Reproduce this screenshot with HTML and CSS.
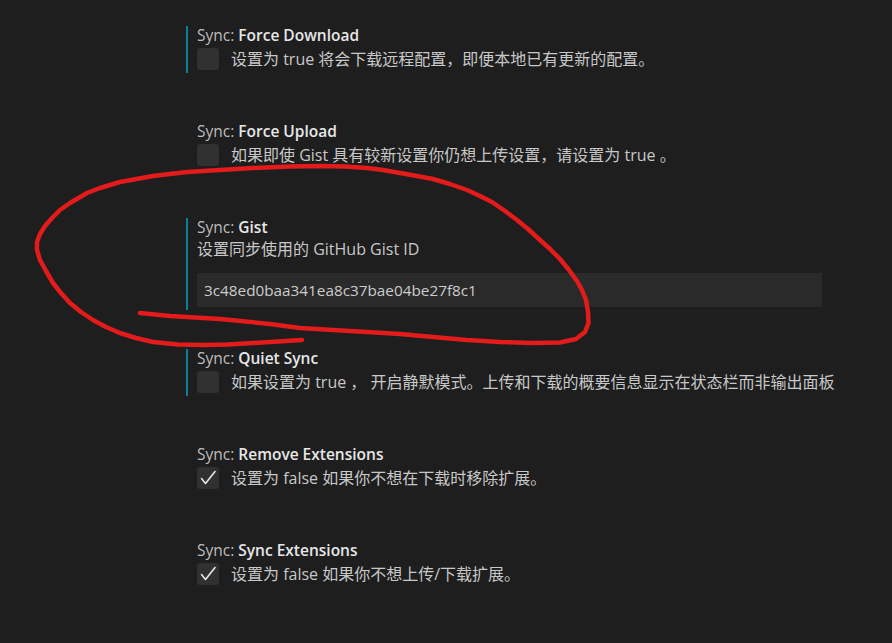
FILE: index.html
```html
<!DOCTYPE html>
<html lang="zh">
<head>
<meta charset="utf-8">
<link rel="stylesheet" href="styles.css">
</head>
<body>
<div class="page">
  <div class="settings">
    <div class="item modified">
      <div class="title"><span class="cat">Sync: </span><span class="label">Force Download</span></div>
      <div class="row"><span class="checkbox"></span><span class="desc">设置为 true 将会下载远程配置，即便本地已有更新的配置。</span></div>
    </div>
    <div class="item">
      <div class="title"><span class="cat">Sync: </span><span class="label">Force Upload</span></div>
      <div class="row"><span class="checkbox"></span><span class="desc">如果即使 Gist 具有较新设置你仍想上传设置，请设置为 true 。</span></div>
    </div>
    <div class="item modified text-item">
      <div class="title"><span class="cat">Sync: </span><span class="label">Gist</span></div>
      <div class="desc block">设置同步使用的 GitHub Gist ID</div>
      <div class="input">3c48ed0baa341ea8c37bae04be27f8c1</div>
    </div>
    <div class="item modified">
      <div class="title"><span class="cat">Sync: </span><span class="label">Quiet Sync</span></div>
      <div class="row"><span class="checkbox"></span><span class="desc">如果设置为 true ， 开启静默模式。上传和下载的概要信息显示在状态栏而非输出面板</span></div>
    </div>
    <div class="item">
      <div class="title"><span class="cat">Sync: </span><span class="label">Remove Extensions</span></div>
      <div class="row"><span class="checkbox checked"><svg viewBox="0 0 22 22" width="22" height="22"><path d="M4.5 11.5 L8.5 16.5 L18 4.5" fill="none" stroke="#e6e6e6" stroke-width="1.6" stroke-linecap="round" stroke-linejoin="round"/></svg></span><span class="desc">设置为 false 如果你不想在下载时移除扩展。</span></div>
    </div>
    <div class="item">
      <div class="title"><span class="cat">Sync: </span><span class="label">Sync Extensions</span></div>
      <div class="row"><span class="checkbox checked"><svg viewBox="0 0 22 22" width="22" height="22"><path d="M4.5 11.5 L8.5 16.5 L18 4.5" fill="none" stroke="#e6e6e6" stroke-width="1.6" stroke-linecap="round" stroke-linejoin="round"/></svg></span><span class="desc">设置为 false 如果你不想上传/下载扩展。</span></div>
    </div>
  </div>
  <svg class="scribble" viewBox="0 0 892 643" width="892" height="643">
    <path d="M140 313 L170 316 L220 319 L270 324 L300 328 L333 330 L367 332 L400 334 L433 337 L467 340 L500 342 L533 343 L560 342.5 L576 339 L585 332 L588.5 323 L588 312 L586 300 L582 290 L577 281 L569 270 L560 259 L550 249 L540 240 L528 229 L517 220 L505 211 L492 202 L480 196 L467 190 L450 184 L433 179 L417 176 L400 173 L383 170 L367 168 L345 166.5 L320 166 L290 166.5 L253 168 L220 170 L187 172 L153 176 L120 182 L100 188 L87 193 L70 203 L60 210 L53 217 L45 226 L40 234 L37 242 L37 250 L40 260 L46 271 L53 283 L61 293 L70 303 L81 312 L93 320 L106 327 L120 333 L136 338 L153 342 L178 344.5 L203 345 L228 344.5 L253 343 L278 341.5 L302 340" fill="none" stroke="#e31b1b" stroke-width="4.5" stroke-linecap="round" stroke-linejoin="round"/>
  </svg>
</div>
</body>
</html>
```

FILE: styles.css
```css
html, body {
  margin: 0;
  padding: 0;
  background: #1e1e1e;
}
body {
  width: 892px;
  height: 643px;
  overflow: hidden;
  font-family: "Open Sans", "Noto Sans CJK SC", sans-serif;
  font-size: 16px;
  color: #c8c8c8;
}
.page {
  position: relative;
  width: 892px;
  height: 643px;
}
.settings {
  padding-top: 26px;
  padding-left: 186px;
  display: flex;
  flex-direction: column;
  gap: 49px;
}
.item {
  border-left: 2px solid transparent;
  padding: 0 0 3px 9px;
  width: 636px;
  box-sizing: border-box;
}
.item.modified {
  border-left-color: #0c7d9d;
}
.text-item {
  margin-bottom: -10px;
}
.title {
  font-size: 15.5px;
  line-height: 16px;
  height: 16px;
  padding-top: 1px;
  white-space: nowrap;
}
.cat {
  color: #bdbdbd;
}
.label {
  color: #e7e7e7;
  font-weight: 600;
}
.row {
  display: flex;
  align-items: center;
  gap: 12px;
  margin-top: 5px;
  white-space: nowrap;
}
.checkbox {
  width: 22px;
  height: 22px;
  flex: none;
  background: #313131;
  border-radius: 3px;
  display: flex;
}
.desc {
  line-height: 22px;
  color: #c8c8c8;
}
.desc.block {
  display: block;
  margin-top: 3px;
}
.input {
  margin-top: 13px;
  height: 34px;
  line-height: 34px;
  font-size: 15.3px;
  background: #2a2a2a;
  padding-left: 7px;
  color: #cccccc;
}
.scribble {
  position: absolute;
  left: 0;
  top: 0;
  pointer-events: none;
}
```
